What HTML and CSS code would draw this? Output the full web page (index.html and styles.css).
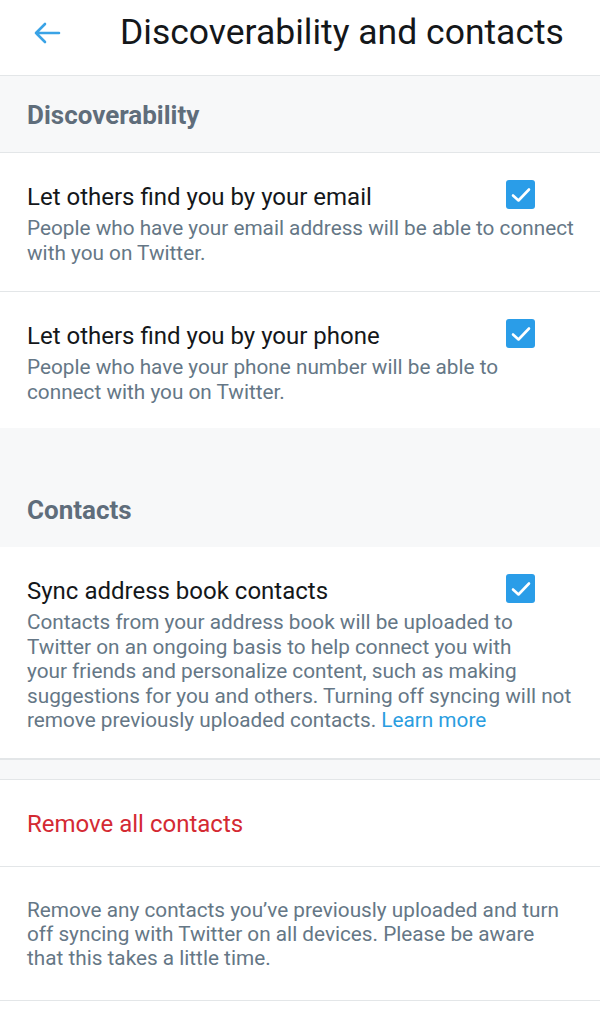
FILE: index.html
```html
<!DOCTYPE html>
<html>
<head>
<meta charset="utf-8">
<link rel="stylesheet" href="styles.css">
</head>
<body>
<header class="topbar">
  <svg class="back" width="28" height="22" viewBox="0 0 28 22"><path d="M26 11H3M12 2L3 11l9 9" fill="none" stroke="#3aa3e6" stroke-width="2.6" stroke-linecap="round" stroke-linejoin="round"/></svg>
  <h1 class="title">Discoverability and contacts</h1>
</header>

<div class="section-head first">Discoverability</div>

<div class="item">
  <div class="row">
    <div class="item-title">Let others find you by your email</div>
    <span class="check"><svg width="20" height="16" viewBox="0 0 20 16"><path d="M2 8.5l5.5 5L18 2.5" fill="none" stroke="#fff" stroke-width="2.6" stroke-linecap="round" stroke-linejoin="round"/></svg></span>
  </div>
  <p class="desc">People who have your email address will be able to connect<br>with you on Twitter.</p>
</div>

<div class="item last">
  <div class="row">
    <div class="item-title">Let others find you by your phone</div>
    <span class="check"><svg width="20" height="16" viewBox="0 0 20 16"><path d="M2 8.5l5.5 5L18 2.5" fill="none" stroke="#fff" stroke-width="2.6" stroke-linecap="round" stroke-linejoin="round"/></svg></span>
  </div>
  <p class="desc">People who have your phone number will be able to<br>connect with you on Twitter.</p>
</div>

<div class="section-head spaced">Contacts</div>

<div class="item tall">
  <div class="row">
    <div class="item-title">Sync address book contacts</div>
    <span class="check"><svg width="20" height="16" viewBox="0 0 20 16"><path d="M2 8.5l5.5 5L18 2.5" fill="none" stroke="#fff" stroke-width="2.6" stroke-linecap="round" stroke-linejoin="round"/></svg></span>
  </div>
  <p class="desc">Contacts from your address book will be uploaded to<br>Twitter on an ongoing basis to help connect you with<br>your friends and personalize content, such as making<br>suggestions for you and others. Turning off syncing will not<br>remove previously uploaded contacts. <span class="link">Learn more</span></p>
</div>

<div class="gap"></div>

<div class="danger">Remove all contacts</div>

<div class="note">
  <p class="desc">Remove any contacts you’ve previously uploaded and turn<br>off syncing with Twitter on all devices. Please be aware<br>that this takes a little time.</p>
</div>
</body>
</html>
```

FILE: styles.css
```css
* { box-sizing: border-box; }
html, body { margin: 0; padding: 0; background: #fff; }
body {
  font-family: Roboto, "Liberation Sans", sans-serif;
  color: #14171a;
  width: 600px;
}
.topbar {
  height: 76px;
  display: flex;
  align-items: center;
  border-bottom: 1px solid #e3e6e8;
  padding-left: 33px;
}
.back { flex: none; margin-top: -10px; }
.title {
  margin: -11px 0 0 59px;
  font-size: 35.5px;
  font-weight: 400;
  line-height: 40px;
  color: #14171a;
  white-space: nowrap;
}
.section-head {
  background: #f7f8f9;
  font-size: 26px;
  font-weight: 700;
  color: #5f6d7b;
  line-height: 30px;
  padding: 24px 27px 22px;
}
.section-head.first { border-bottom: 1px solid #e3e6e8; }
.section-head.spaced { padding-top: 67px; }
.item {
  padding: 30px 18px 26px 27px;
  border-bottom: 1px solid #e3e6e8;
}
.item.last { border-bottom: none; padding-bottom: 24px; }
.item.tall { padding-bottom: 25px; }
.row {
  display: flex;
  align-items: flex-start;
  justify-content: space-between;
  padding-right: 47px;
}
.item-title {
  font-size: 24px;
  line-height: 28px;
}
.check {
  flex: none;
  width: 29px;
  height: 29px;
  margin-top: -3px;
  border-radius: 3px;
  background: #2a9de8;
  display: flex;
  align-items: center;
  justify-content: center;
}
.desc {
  margin: 5px 0 0;
  font-size: 20.75px;
  line-height: 24.5px;
  color: #657786;
  white-space: nowrap;
}
.link { color: #2a9de0; }
.gap {
  height: 21px;
  background: #f7f8f9;
  border-top: 1px solid #e3e6e8;
  border-bottom: 1px solid #e3e6e8;
}
.danger {
  color: #d42a33;
  font-size: 24px;
  line-height: 28px;
  padding: 30px 27px 28px;
  border-bottom: 1px solid #e3e6e8;
}
.note {
  padding: 31px 18px 30px 27px;
  border-bottom: 1px solid #e3e6e8;
}
.note .desc { margin: 0; line-height: 24px; }
```
